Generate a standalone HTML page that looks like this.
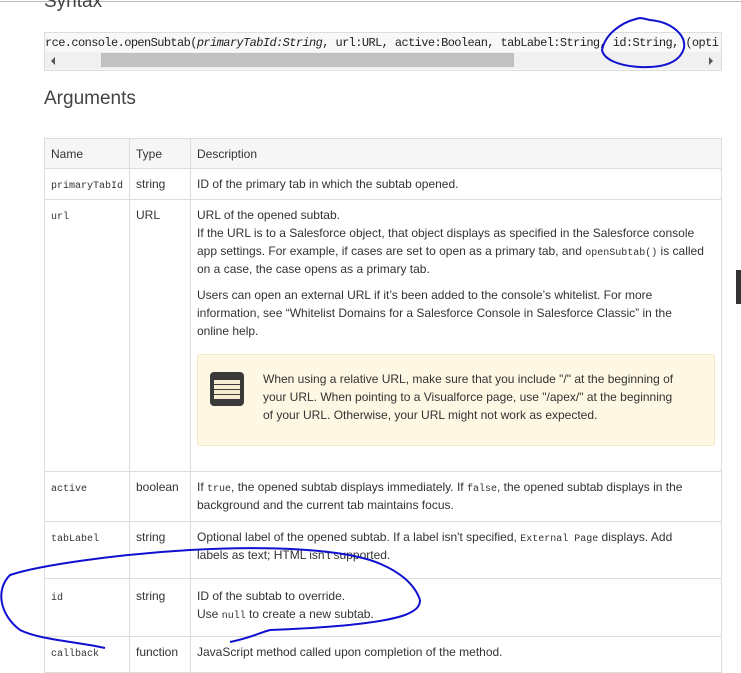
<!DOCTYPE html>
<html><head><style>
body{margin:0;width:741px;height:672px;overflow:hidden;background:#fff;font-family:"Liberation Sans",sans-serif;color:#333;position:relative}
.a{position:absolute}
.mono{font-family:"Liberation Mono",monospace}
td{vertical-align:top;border:1px solid #ddd;padding:6px 6px 0;font-size:12px;line-height:18px;box-sizing:border-box}
table{border-collapse:collapse;position:absolute;left:44px;top:138px;width:678px;table-layout:fixed}
code{font-family:"Liberation Mono",monospace;font-size:10px;line-height:1}
</style></head><body>
<div class="a" style="left:0;top:1px;width:741px;height:1px;background:#bbb"></div>
<div class="a" style="left:44px;top:-9px;font-size:19px;color:#444">Syntax</div>
<div class="a" style="left:44px;top:32px;width:676px;height:37px;border:1px solid #ddd;background:#f8f8f8;overflow:hidden">
 <div class="mono" style="position:absolute;left:0;top:3px;font-size:12px;white-space:nowrap;color:#222;letter-spacing:-0.6px">rce.console.openSubtab(<i>primaryTabId:String</i>, url:URL, active:Boolean, tabLabel:String, id:String, (opti</div>
 <div style="position:absolute;left:0;top:19px;width:676px;height:17px;background:#f0f0f0"></div>
 <div style="position:absolute;left:56px;top:20px;width:413px;height:14px;background:#c1c1c1"></div>
 <div style="position:absolute;left:6px;top:24px;border:4px solid transparent;border-right:4px solid #555;border-left:0"></div>
 <div style="position:absolute;left:664px;top:24px;border:4px solid transparent;border-left:4px solid #555;border-right:0"></div>
</div>
<div class="a" style="left:44px;top:88px;font-size:19px;color:#444">Arguments</div>
<table>
<colgroup><col style="width:85px"><col style="width:61px"><col></colgroup>
<tr style="background:#f6f6f6;height:30px"><td>Name</td><td>Type</td><td>Description</td></tr>
<tr style="height:31px"><td><code>primaryTabId</code></td><td>string</td><td>ID of the primary tab in which the subtab opened.</td></tr>
<tr style="height:272px"><td><code>url</code></td><td>URL</td><td style="padding-right:14px">URL of the opened subtab.<br>If the URL is to a Salesforce object, that object displays as specified in the Salesforce console app settings. For example, if cases are set to open as a primary tab, and <code>openSubtab()</code> is called on a case, the case opens as a primary tab.
<div style="margin-top:8px">Users can open an external URL if it’s been added to the console’s whitelist. For more information, see “Whitelist Domains for a Salesforce Console in Salesforce Classic” in the online help.</div>
<div style="margin-top:14px;margin-right:-8px;background:#fdf7e3;border:1px solid #f3e9c9;border-radius:3px;height:90px;position:relative">
 <div style="position:absolute;left:12px;top:17px;width:34px;height:34px;background:#3a3a3a;border-radius:4px"><div style="position:absolute;left:4px;top:8px;width:26px;height:20px;background:repeating-linear-gradient(#f6edd2 0 4px,#3a3a3a 4px 5px)"></div></div>
 <div style="position:absolute;left:65px;top:15px;right:30px">When using a relative URL, make sure that you include "/" at the beginning of your URL. When pointing to a Visualforce page, use "/apex/" at the beginning of your URL. Otherwise, your URL might not work as expected.</div>
</div></td></tr>
<tr style="height:50px"><td><code>active</code></td><td>boolean</td><td>If <code>true</code>, the opened subtab displays immediately. If <code>false</code>, the opened subtab displays in the background and the current tab maintains focus.</td></tr>
<tr style="height:57px"><td><code>tabLabel</code></td><td>string</td><td style="padding-right:30px">Optional label of the opened subtab. If a label isn't specified, <code>External Page</code> displays. Add labels as text; HTML isn't supported.</td></tr>
<tr style="height:58px"><td style="padding-top:8px"><code>id</code></td><td style="padding-top:8px">string</td><td style="padding-top:8px">ID of the subtab to override.<br>Use <code>null</code> to create a new subtab.</td></tr>
<tr style="height:36px"><td><code>callback</code></td><td>function</td><td>JavaScript method called upon completion of the method.</td></tr>
</table>
<div class="a" style="left:736px;top:270px;width:5px;height:34px;background:#333"></div>
<svg class="a" style="left:0;top:0" width="741" height="672" fill="none" stroke="#1010d0" stroke-width="2">
<path d="M640 18 C620 22 605 35 602 50 C604 60 620 66 640 67 C665 68 680 62 684 48 C686 35 672 22 650 20 C645 19 642 18 640 18"/>
<path d="M420 600 C415 585 400 570 370 560 C330 548 260 546 190 550 C120 554 40 565 10 575 C-5 590 0 615 20 630 C40 640 80 642 105 648"/>
<path d="M230 642 C250 638 262 632 270 630 C320 628 380 624 405 615 C418 610 420 605 420 600"/>
</svg>
</body></html>
